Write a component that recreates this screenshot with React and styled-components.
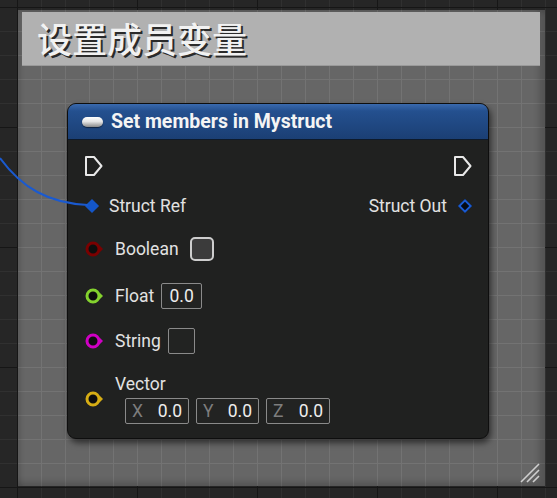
import React from 'react'
import styled, { createGlobalStyle } from 'styled-components'

const GlobalStyle = createGlobalStyle`
  html, body {
    margin: 0;
    padding: 0;
    width: 557px;
    height: 498px;
    overflow: hidden;
  }
  body {
    background-color: #262626;
    background-image:
      linear-gradient(to right, #161616 1px, transparent 1px),
      linear-gradient(to bottom, #161616 1px, transparent 1px),
      linear-gradient(to right, #303030 1px, transparent 1px),
      linear-gradient(to bottom, #303030 1px, transparent 1px);
    background-size: 120px 120px, 120px 120px, 24px 24px, 24px 24px;
    background-position: 17px 7px, 17px 7px, 17px 7px, 17px 7px;
    font-family: Roboto, "Noto Sans", sans-serif;
  }
`

const Canvas = styled.div`
  position: relative;
  width: 557px;
  height: 498px;
  padding: 10px 12px 0 18px;
  box-sizing: border-box;
`

const Wire = styled.svg`
  position: absolute;
  left: 0;
  top: 0;
  z-index: 2;
`

const Comment = styled.div`
  position: relative;
  width: 527px;
  height: 476px;
  box-sizing: border-box;
  padding: 2px 5px 0 4px;
  background-color: #666;
  background-image:
    linear-gradient(to right, #737373 1px, transparent 1px),
    linear-gradient(to bottom, #737373 1px, transparent 1px);
  background-size: 24px 24px;
  background-position: -1px -3px;
  box-shadow: inset -6px -4px 6px rgba(0, 0, 0, 0.18), inset 3px 3px 4px rgba(0, 0, 0, 0.12);
`

const CommentTitle = styled.div`
  height: 54px;
  background: #b1b1b1;
  box-sizing: border-box;
  padding: 4px 0 0 15px;
  border-bottom: 1px solid #9a9a9a;
  color: #f2f2f2;
  font-family: "Noto Sans CJK SC", "Noto Sans", sans-serif;
  font-size: 35px;
  line-height: 44px;
  font-weight: 500;
  text-shadow: 2px 2px 0 #2a2a2a;
`

const Hatch = styled.svg`
  position: absolute;
  right: 4px;
  bottom: 3px;
`

const Node = styled.div`
  margin: 37px 0 0 45px;
  width: 422px;
  height: 336px;
  box-sizing: border-box;
  border-radius: 9px;
  background: #202120;
  border: 1px solid #0e0e0e;
  box-shadow: 2px 4px 6px rgba(0, 0, 0, 0.55);
  overflow: hidden;
  display: flex;
  flex-direction: column;
`

const Header = styled.div`
  height: 35px;
  flex: none;
  display: flex;
  align-items: center;
  gap: 8px;
  padding-left: 14px;
  background: linear-gradient(to bottom, #3a6aae 0%, #24508f 20%, #1b3f74 100%);
  border-bottom: 1px solid #0d1a2c;
  color: #f4f4f4;
  font-size: 19.5px;
  font-weight: 700;
`

const Pill = styled.span`
  width: 21px;
  height: 10px;
  border-radius: 5px;
  background: linear-gradient(to bottom, #ffffff 0%, #e6e6e6 45%, #8a8a8a 100%);
  box-shadow: 0 1px 1px rgba(0, 0, 0, 0.5);
`

const Body = styled.div`
  flex: 1;
  display: flex;
  flex-direction: column;
  padding: 0 16px 0 16px;
  color: #e2e2e2;
  font-size: 17.5px;
`

const Row = styled.div`
  display: flex;
  align-items: center;
  justify-content: space-between;
  height: 24px;
  margin-top: ${(p) => p.$top}px;
`

const Side = styled.div`
  display: flex;
  align-items: center;
  gap: ${(p) => p.$gap}px;
`

const Label = styled.span`
  white-space: nowrap;
  line-height: 20px;
`

const Diamond = styled.span`
  width: 10px;
  height: 10px;
  margin: 0 2px 0 3px;
  transform: rotate(45deg);
  box-sizing: border-box;
  background: ${(p) => (p.$hollow ? '#050a14' : '#1456c8')};
  border: ${(p) => (p.$hollow ? '2.5px solid #1a5ad0' : 'none')};
`

const CheckBox = styled.span`
  width: 24px;
  height: 24px;
  box-sizing: border-box;
  border: 2px solid #cdcdcd;
  border-radius: 5px;
  background: #3b3b3b;
`

const ValueBox = styled.span`
  display: inline-flex;
  align-items: center;
  justify-content: ${(p) => (p.$axis ? 'space-between' : 'center')};
  box-sizing: border-box;
  width: ${(p) => p.$w}px;
  height: 26px;
  padding: 0 6px 0 6px;
  border: 1px solid #8a8a8a;
  border-radius: 2px;
  background: #222322;
  color: #ededed;
  font-size: 17.5px;
`

const Axis = styled.span`
  color: #7d7d7d;
`

const VectorBlock = styled.div`
  display: flex;
  align-items: center;
  gap: 11px;
  margin-top: 21px;
`

const VectorCol = styled.div`
  display: flex;
  flex-direction: column;
  gap: 4px;
`

const VectorFields = styled.div`
  display: flex;
  gap: 7px;
  margin-left: 10px;
`

function ExecPin() {
  return (
    <svg width="19" height="22" viewBox="0 0 19 22">
      <path
        d="M2 2 H10 L17.5 11 L10 20 H2 Z"
        fill="none"
        stroke="#e8e8e8"
        strokeWidth="2"
        strokeLinejoin="round"
      />
    </svg>
  )
}

function DataPin({ color }) {
  return (
    <svg width="20" height="18" viewBox="0 0 20 18">
      <circle cx="9" cy="9" r="6" fill="#0e0e0e" stroke={color} strokeWidth="3" />
      <path d="M15.5 5.5 L19 9 L15.5 12.5 Z" fill={color} />
    </svg>
  )
}

function InputRow({ top, color, label, gap, children }) {
  return (
    <Row $top={top}>
      <Side $gap={11}>
        <DataPin color={color} />
        <Side $gap={gap}>
          <Label>{label}</Label>
          {children}
        </Side>
      </Side>
    </Row>
  )
}

export default function App() {
  return (
    <>
      <GlobalStyle />
      <Canvas>
        <Wire width="100" height="220">
          <path
            d="M0 158 C 22 188, 48 203, 88 205"
            fill="none"
            stroke="#1a5ad0"
            strokeWidth="2"
          />
        </Wire>
        <Comment>
          <CommentTitle>设置成员变量</CommentTitle>
          <Node>
            <Header>
              <Pill />
              <span>Set members in Mystruct</span>
            </Header>
            <Body>
              <Row $top={14}>
                <ExecPin />
                <ExecPin />
              </Row>
              <Row $top={16}>
                <Side $gap={10}>
                  <Diamond />
                  <Label>Struct Ref</Label>
                </Side>
                <Side $gap={10}>
                  <Label>Struct Out</Label>
                  <Diamond $hollow />
                </Side>
              </Row>
              <InputRow top={19} color="#7a0000" label="Boolean" gap={11}>
                <CheckBox />
              </InputRow>
              <InputRow top={23} color="#84d22e" label="Float" gap={7}>
                <ValueBox $w={41}>0.0</ValueBox>
              </InputRow>
              <InputRow top={21} color="#d000c4" label="String" gap={7}>
                <ValueBox $w={27} />
              </InputRow>
              <VectorBlock>
                <DataPin color="#d6ad14" />
                <VectorCol>
                  <Label>Vector</Label>
                  <VectorFields>
                    <ValueBox $w={64} $axis>
                      <Axis>X</Axis>0.0
                    </ValueBox>
                    <ValueBox $w={63} $axis>
                      <Axis>Y</Axis>0.0
                    </ValueBox>
                    <ValueBox $w={64} $axis>
                      <Axis>Z</Axis>0.0
                    </ValueBox>
                  </VectorFields>
                </VectorCol>
              </VectorBlock>
            </Body>
          </Node>
          <Hatch width="22" height="20" viewBox="0 0 22 20">
            <path
              d="M2 19 L20 1 M8 19 L20 7 M14 19 L20 13"
              stroke="#cfcfcf"
              strokeWidth="1.6"
            />
          </Hatch>
        </Comment>
      </Canvas>
    </>
  )
}
